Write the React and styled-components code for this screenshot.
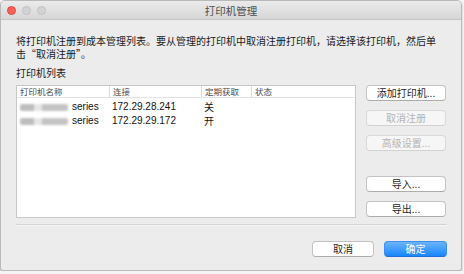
import React from 'react';
import styled, { createGlobalStyle } from 'styled-components';

const GlobalStyle = createGlobalStyle`
  html, body {
    margin: 0;
    padding: 0;
    background: #f4f4f4;
  }
  body {
    font-family: "Liberation Sans", "Noto Sans CJK SC", sans-serif;
  }
`;

const cjk = `"Noto Sans CJK SC", "Liberation Sans", sans-serif`;

const Window = styled.div`
  width: 462px;
  height: 271px;
  background: #ececec;
  border: 1px solid #b9b9b9;
  border-radius: 5px 5px 3px 3px;
  box-shadow: 0 1px 2px rgba(0, 0, 0, 0.25);
  display: flex;
  flex-direction: column;
  overflow: hidden;
  box-sizing: border-box;
`;

const TitleBar = styled.div`
  height: 19px;
  flex: none;
  box-sizing: border-box;
  background: linear-gradient(#ebebeb, #d6d6d6);
  border-bottom: 1px solid #c4c4c4;
  display: flex;
  align-items: center;
  position: relative;
  padding-left: 6px;
  gap: 6px;
`;

const Light = styled.span`
  width: 9px;
  height: 9px;
  border-radius: 50%;
  box-sizing: border-box;
  background: ${p => (p.red ? '#fc5f57' : '#d3d3d3')};
  border: 1px solid ${p => (p.red ? '#df4740' : '#c1c1c1')};
`;

const Title = styled.div`
  position: absolute;
  left: 0;
  right: 0;
  top: 0;
  bottom: 0;
  display: flex;
  align-items: center;
  justify-content: center;
  font-family: ${cjk};
  font-size: 10.5px;
  color: #4d4d4d;
  pointer-events: none;
`;

const Content = styled.div`
  flex: 1;
  padding: 14px 15px 0 15px;
  display: flex;
  flex-direction: column;
  font-family: ${cjk};
  font-size: 10px;
  color: #1a1a1a;
`;

const Description = styled.p`
  margin: 0;
  line-height: 13px;
  width: 425px;
`;

const SectionLabel = styled.div`
  margin-top: 6px;
  line-height: 13px;
`;

const Main = styled.div`
  display: flex;
  gap: 10px;
  margin-top: 6px;
`;

const Table = styled.div`
  width: 341px;
  height: 133px;
  box-sizing: border-box;
  background: #fff;
  border: 1px solid #c7c7c7;
`;

const cols = '92px 92px 50px 1fr';

const HeaderRow = styled.div`
  display: grid;
  grid-template-columns: ${cols};
  height: 11px;
  border-bottom: 1px solid #e2e2e2;
  font-size: 8.5px;
  color: #4a4a4a;
  line-height: 11px;
`;

const HeaderCell = styled.div`
  padding-left: 3px;
  border-left: ${p => (p.first ? 'none' : '1px solid #dcdcdc')};
  white-space: nowrap;
  overflow: hidden;
`;

const Body = styled.div`
  padding-top: 2px;
`;

const Row = styled.div`
  display: grid;
  grid-template-columns: ${cols};
  height: 14px;
  line-height: 14px;
  font-size: 10px;
  color: #111;
`;

const Cell = styled.div`
  padding-left: 3px;
  white-space: nowrap;
  display: flex;
  align-items: center;
  font-family: ${p => (p.latin ? '"Liberation Sans", sans-serif' : cjk)};
`;

const Blurred = styled.span`
  display: inline-block;
  width: 48px;
  height: 7px;
  margin-right: 4px;
  border-radius: 2px;
  background: linear-gradient(90deg, #bdbdbd 0 30%, #e6e6e6 30% 45%, #c4c4c4 45% 100%);
  filter: blur(1.3px);
`;

const Side = styled.div`
  width: 80px;
  display: flex;
  flex-direction: column;
  gap: 9px;
`;

const Spacer = styled.div`
  height: 7px;
`;

const Button = styled.button`
  width: ${p => p.w || 80}px;
  height: 16px;
  padding: 0;
  box-sizing: border-box;
  border-radius: 4px;
  font-family: ${cjk};
  font-size: 10px;
  line-height: 14px;
  color: ${p => (p.disabled ? '#b4b4b4' : '#1f1f1f')};
  background: ${p => (p.disabled ? '#f6f6f6' : '#ffffff')};
  border: 1px solid ${p => (p.disabled ? '#d9d9d9' : '#c3c3c3')};
  border-bottom-color: ${p => (p.disabled ? '#d2d2d2' : '#acacac')};
`;

const PrimaryButton = styled(Button)`
  color: #fff;
  background: linear-gradient(#6ab4fb, #1a86fe);
  border: 1px solid #3e8ef0;
  border-bottom-color: #1a6fd8;
`;

const Separator = styled.div`
  margin-top: 6px;
  height: 1px;
  width: 431px;
  background: #d3d3d3;
  border-bottom: 1px solid #f6f6f6;
`;

const Footer = styled.div`
  display: flex;
  justify-content: flex-end;
  gap: 10px;
  width: 431px;
  margin-top: 15px;
`;

const printers = [
  { ip: '172.29.28.241', periodic: '关' },
  { ip: '172.29.29.172', periodic: '开' },
];

export default function App() {
  return (
    <>
      <GlobalStyle />
      <Window>
        <TitleBar>
          <Light red />
          <Light />
          <Light />
          <Title>打印机管理</Title>
        </TitleBar>
        <Content>
          <Description>
            将打印机注册到成本管理列表。要从管理的打印机中取消注册打印机，请选择该打印机，然后单击“取消注册”。
          </Description>
          <SectionLabel>打印机列表</SectionLabel>
          <Main>
            <Table>
              <HeaderRow>
                <HeaderCell first>打印机名称</HeaderCell>
                <HeaderCell>连接</HeaderCell>
                <HeaderCell>定期获取</HeaderCell>
                <HeaderCell>状态</HeaderCell>
              </HeaderRow>
              <Body>
                {printers.map(p => (
                  <Row key={p.ip}>
                    <Cell latin>
                      <Blurred />series
                    </Cell>
                    <Cell latin>{p.ip}</Cell>
                    <Cell>{p.periodic}</Cell>
                    <Cell />
                  </Row>
                ))}
              </Body>
            </Table>
            <Side>
              <Button>添加打印机...</Button>
              <Button disabled>取消注册</Button>
              <Button disabled>高级设置...</Button>
              <Spacer />
              <Button>导入...</Button>
              <Button>导出...</Button>
            </Side>
          </Main>
          <Separator />
          <Footer>
            <Button w={62}>取消</Button>
            <PrimaryButton w={63}>确定</PrimaryButton>
          </Footer>
        </Content>
      </Window>
    </>
  );
}
